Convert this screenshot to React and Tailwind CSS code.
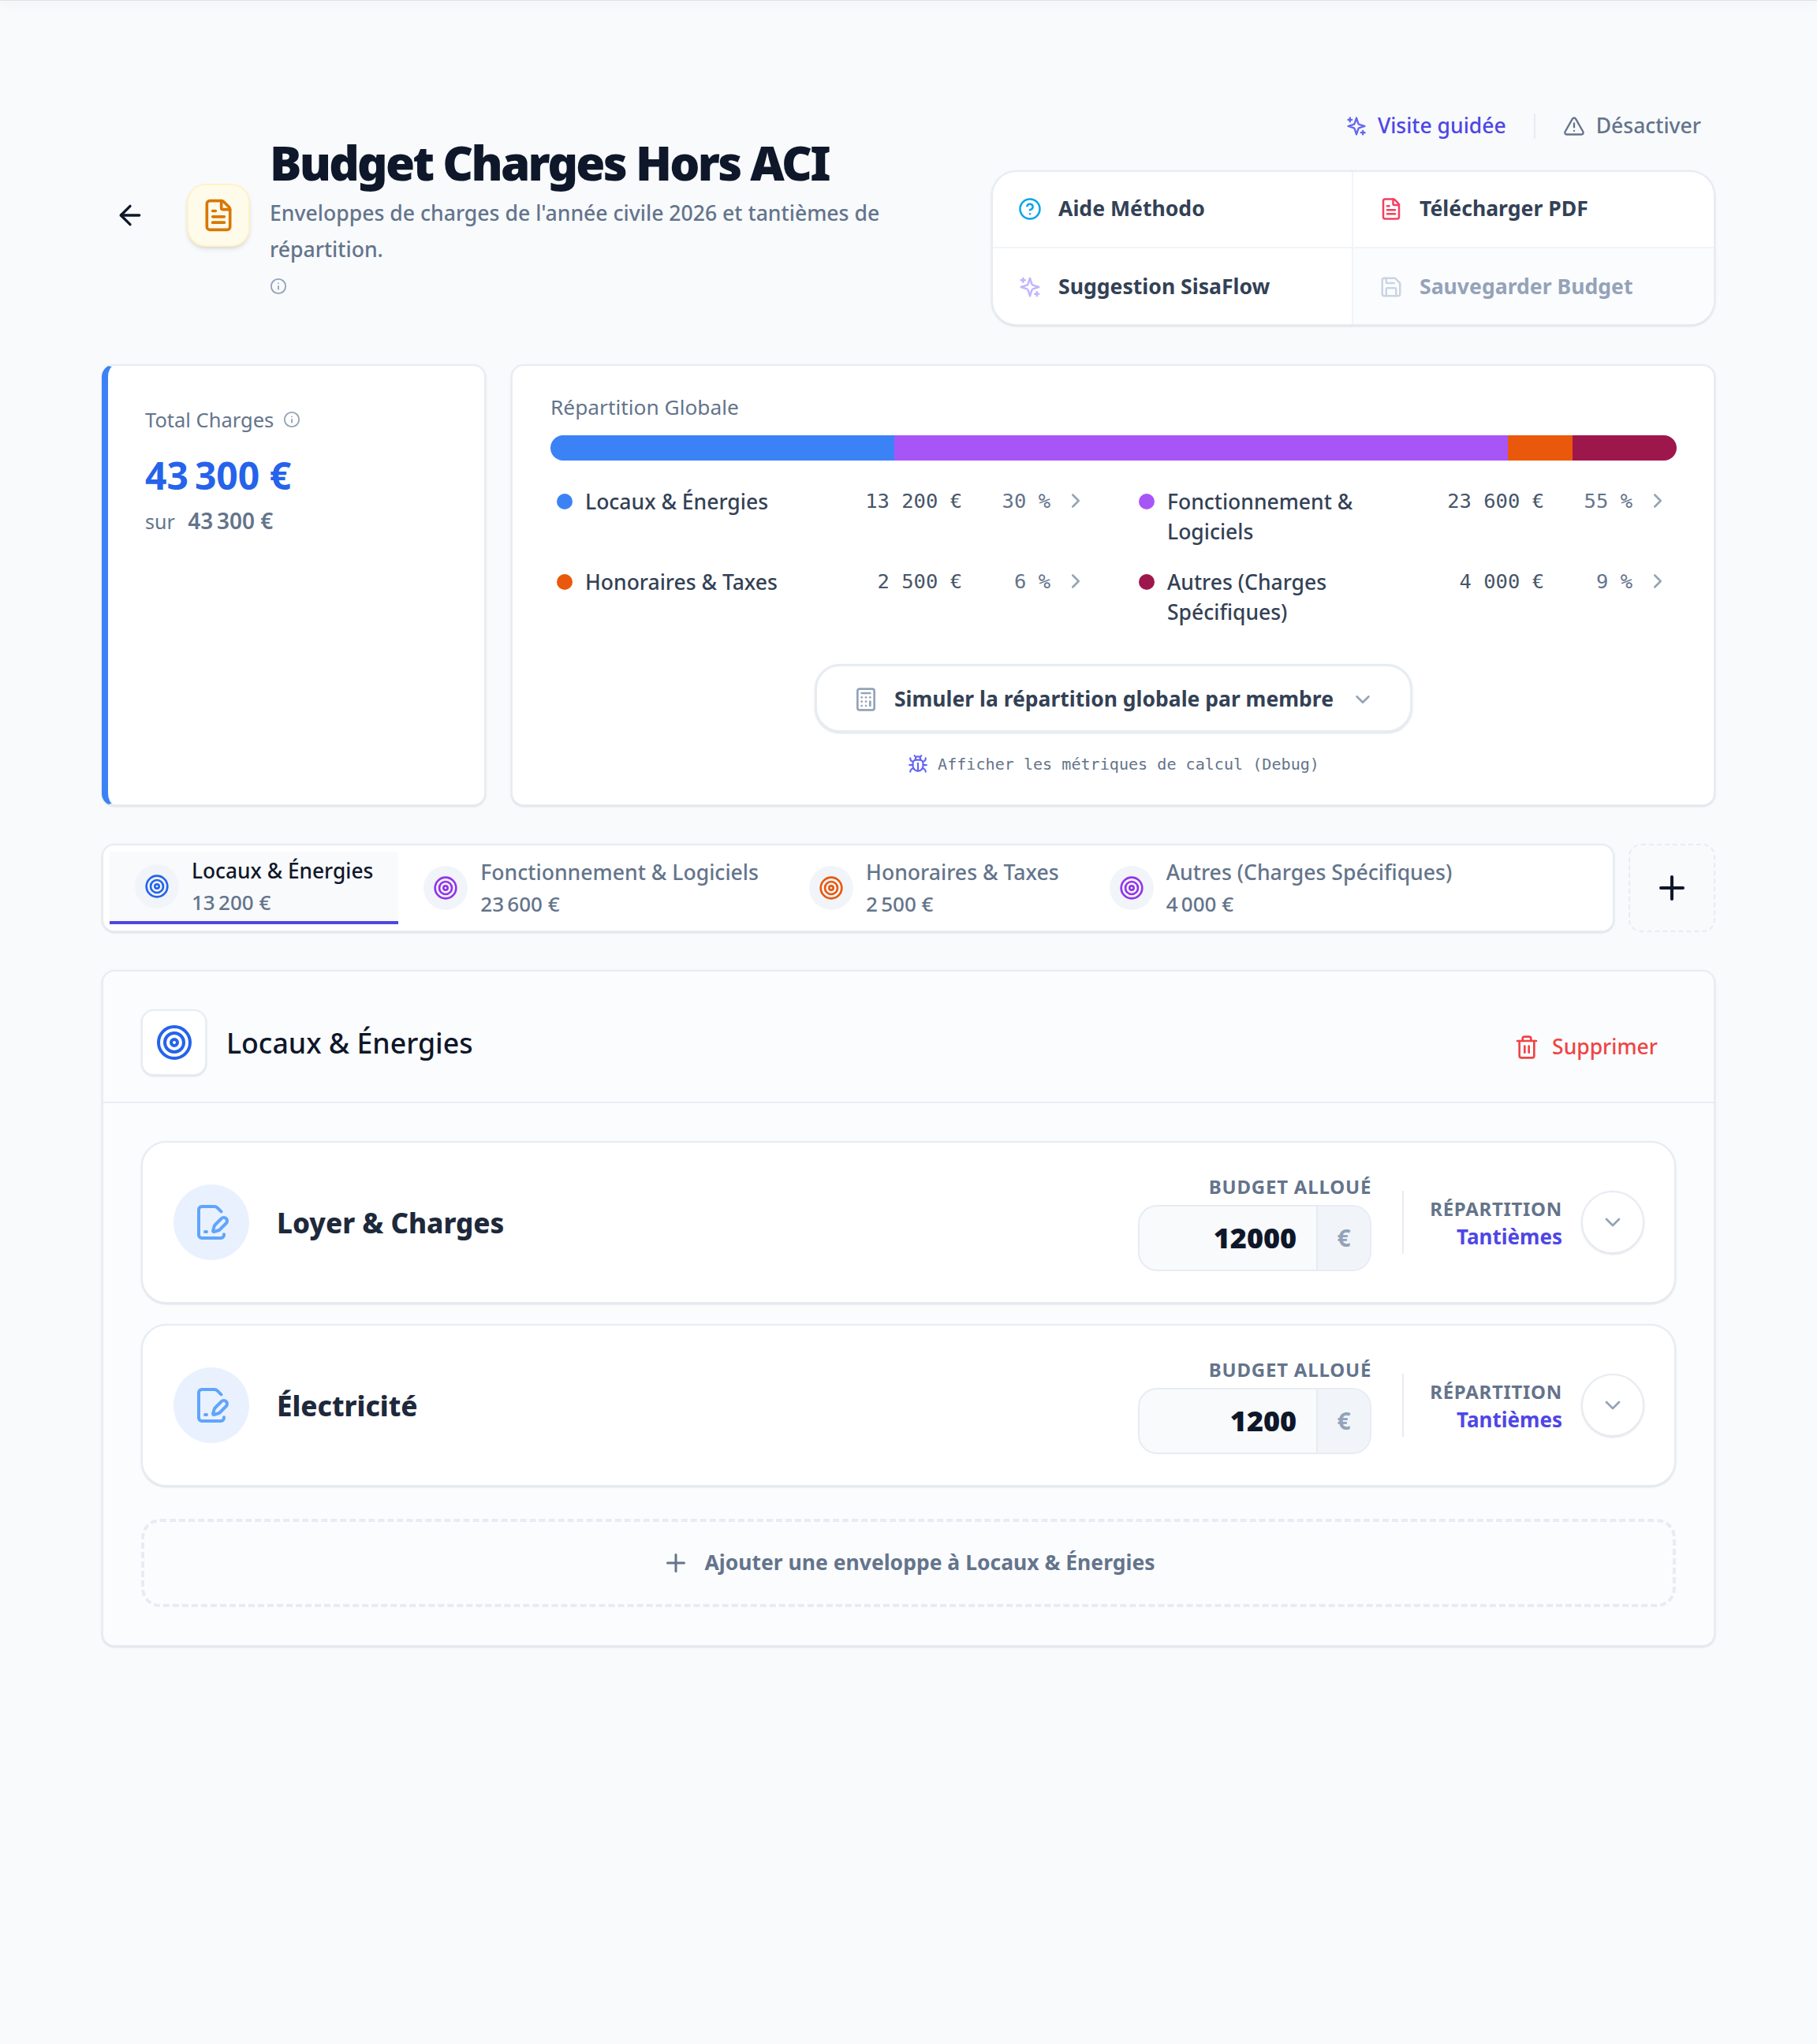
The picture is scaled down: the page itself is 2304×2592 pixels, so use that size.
import React from "react";
import {
  ArrowLeft, FileText, TriangleAlert, CircleHelp, Save, Calculator, ChevronDown,
  ChevronRight, Bug, Target, Plus, Trash2, Info, FilePenLine,
} from "lucide-react";

const legend = [
  { label: "Locaux & Énergies", amount: "13 200 €", pct: "30 %", dot: "bg-[#3b82f6]" },
  { label: "Fonctionnement & Logiciels", amount: "23 600 €", pct: "55 %", dot: "bg-[#a855f7]" },
  { label: "Honoraires & Taxes", amount: "2 500 €", pct: "6 %", dot: "bg-[#ea580c]" },
  { label: "Autres (Charges Spécifiques)", amount: "4 000 €", pct: "9 %", dot: "bg-[#9d174d]" },
];

const tabs = [
  { label: "Locaux & Énergies", amount: "13\u202f200\u00a0€", color: "text-[#2563eb]", active: true },
  { label: "Fonctionnement & Logiciels", amount: "23\u202f600\u00a0€", color: "text-[#9333ea]" },
  { label: "Honoraires & Taxes", amount: "2\u202f500\u00a0€", color: "text-[#ea580c]" },
  { label: "Autres (Charges Spécifiques)", amount: "4\u202f000\u00a0€", color: "text-[#9333ea]" },
];

function SparkIcon({ className }) {
  return (
    <svg className={className} viewBox="0 0 24 24" fill="none" stroke="currentColor" strokeWidth="2" strokeLinecap="round" strokeLinejoin="round">
      <path d="m12 3-1.912 5.813a2 2 0 0 1-1.275 1.275L3 12l5.813 1.912a2 2 0 0 1 1.275 1.275L12 21l1.912-5.813a2 2 0 0 1 1.275-1.275L21 12l-5.813-1.912a2 2 0 0 1-1.275-1.275L12 3Z" />
      <path d="M5 3v4" />
      <path d="M19 17v4" />
      <path d="M3 5h4" />
      <path d="M17 19h4" />
    </svg>
  );
}

function ActionCell({ icon: Icon, iconClass, textClass, children, className = "" }) {
  return (
    <button className={`flex items-center gap-[21px] text-[26.6px] font-bold ${textClass} ${className}`}>
      <Icon className={`w-[30px] h-[30px] ${iconClass}`} strokeWidth={2} />
      <span>{children}</span>
    </button>
  );
}

function EnvelopeCard({ title, value }) {
  return (
    <div className="h-[206px] rounded-[32px] border-2 border-[#e7ecf3] bg-white shadow-sm flex items-center pl-[39px] pr-[38px]">
      <div className="w-[96px] h-[96px] rounded-full bg-[#eaf1fe] flex items-center justify-center">
        <FilePenLine className="w-[48px] h-[48px] text-[#60a5fa]" strokeWidth={2} />
      </div>
      <div className="ml-[35px] pt-[2px] flex-1 text-[35px] font-extrabold text-[#1e293b]">{title}</div>
      <div className="flex flex-col items-end">
        <div className="text-[24px] leading-[32px] font-bold tracking-[0.8px] text-[#64748b]">BUDGET ALLOUÉ</div>
        <div className="mt-[7px] w-[296px] h-[84px] rounded-[24px] border-2 border-[#e7ecf3] bg-[#f8fafc] flex overflow-hidden">
          <div className="flex-1 flex items-center justify-end pr-[25px] text-[36px] font-black text-[#0f172a]">{value}</div>
          <div className="w-[68px] border-l-2 border-[#e7ecf3] bg-[#f1f5f9] flex items-center justify-center text-[30px] font-bold text-[#94a3b8]">€</div>
        </div>
      </div>
      <div className="ml-[39px] w-[2px] h-[80px] bg-[#e7ecf3]" />
      <div className="ml-[33px] flex flex-col items-end">
        <div className="text-[24px] leading-[36px] font-bold tracking-[0.7px] text-[#64748b]">RÉPARTITION</div>
        <div className="-mt-[1px] text-[26px] leading-[36px] font-bold text-[#4f46e5]">Tantièmes</div>
      </div>
      <button className="ml-[24px] w-[80px] h-[80px] rounded-full border-2 border-[#e7ecf3] bg-white shadow-sm flex items-center justify-center">
        <ChevronDown className="w-[32px] h-[32px] text-[#94a3b8]" strokeWidth={2} />
      </button>
    </div>
  );
}

export default function App() {
  return (
    <div className="min-h-[2592px] bg-[#f8fafc] font-['Noto_Sans',sans-serif] overflow-hidden">
      <div className="h-px bg-[#dfe2e6] shadow-[0_2px_12px_rgba(0,0,0,0.22)]" />
      <div className="px-[129px] pt-[143px]">
        {/* Header */}
        <div className="flex justify-between items-start">
          <div className="flex items-center mt-[28px]">
            <ArrowLeft className="ml-[16px] w-[40px] h-[40px] text-[#0f172a]" strokeWidth={2} />
            <div className="ml-[52px] w-[80px] h-[80px] rounded-[24px] border-2 border-[#fef3c7] bg-[#fffbeb] shadow-md flex items-center justify-center">
              <FileText className="w-[44px] h-[44px] text-[#d97706]" strokeWidth={2} />
            </div>
            <div className="ml-[25px]">
              <h1 className="mt-[1px] text-[60px] leading-[66px] font-black tracking-[-2.7px] text-[#0f172a]">Budget Charges Hors ACI</h1>
              <p className="mt-[8px] w-[800px] text-[26.6px] leading-[46px] font-medium text-[#64748b]">
                Enveloppes de charges de l'année civile 2026 et tantièmes de répartition.
              </p>
              <Info className="mt-[13px] w-[22px] h-[22px] text-[#94a3b8]" strokeWidth={2} />
            </div>
          </div>
          <div className="w-[918px]">
            <div className="flex items-center justify-end h-[32px] pr-[18px]">
              <SparkIcon className="w-[28px] h-[28px] text-[#6366f1]" />
              <span className="ml-[13px] text-[26.5px] font-medium text-[#4f46e5]">Visite guidée</span>
              <div className="ml-[35px] w-[2px] h-[32px] bg-[#e7ecf3]" />
              <TriangleAlert className="ml-[35px] w-[28px] h-[28px] text-[#64748b]" strokeWidth={2} />
              <span className="ml-[14px] text-[26.5px] font-medium text-[#64748b]">Désactiver</span>
            </div>
            <div className="mt-[40px] h-[197px] rounded-[32px] border-2 border-[#e7ecf3] bg-white shadow-sm grid grid-cols-2 grid-rows-2 overflow-hidden">
              <ActionCell icon={CircleHelp} iconClass="text-[#0ea5e9]" textClass="text-[#334155]" className="pl-[32px] border-r-2 border-b-2 border-[#f1f5f9]">Aide Méthodo</ActionCell>
              <ActionCell icon={FileText} iconClass="text-[#f43f5e]" textClass="text-[#334155]" className="pl-[33px] border-b-2 border-[#f1f5f9]">Télécharger PDF</ActionCell>
              <ActionCell icon={SparkIcon} iconClass="text-[#c4b5fd]" textClass="text-[#334155]" className="pl-[32px] pt-[2px] border-r-2 border-[#f1f5f9]">Suggestion SisaFlow</ActionCell>
              <ActionCell icon={Save} iconClass="text-[#cbd5e1]" textClass="text-[#94a3b8]" className="pl-[33px] pt-[2px] bg-[#fbfcfe]">Sauvegarder Budget</ActionCell>
            </div>
          </div>
        </div>

        {/* Stats */}
        <div className="mt-[49px] flex gap-[32px] h-[560px]">
          <div className="w-[487px] rounded-[16px] border-2 border-[#e7ecf3] border-l-[8px] border-l-[#3b82f6] bg-white shadow-sm pl-[47px] pt-[50px]">
            <div className="flex items-center gap-[12px] text-[25.5px] leading-[36px] text-[#64748b]">
              Total Charges <Info className="w-[22px] h-[22px] text-[#94a3b8]" strokeWidth={2} />
            </div>
            <div className="mt-[23px] text-[48px] leading-[60px] font-bold text-[#2563eb]">{"43\u202f300\u00a0€"}</div>
            <div className="mt-[9px] text-[25px] leading-[36px] text-[#64748b]">sur <span className="ml-[10px] text-[28px] font-semibold">{"43\u202f300\u00a0€"}</span></div>
          </div>
          <div className="flex-1 rounded-[16px] border-2 border-[#e7ecf3] bg-white shadow-sm pl-[48px] pr-[47px] pt-[32px]">
            <div className="text-[26.3px] leading-[40px] text-[#64748b]">Répartition Globale</div>
            <div className="mt-[16px] h-[32px] rounded-full overflow-hidden flex">
              <div className="w-[30.5%] bg-[#3b82f6]" />
              <div className="w-[54.5%] bg-[#a855f7]" />
              <div className="w-[5.77%] bg-[#ea580c]" />
              <div className="flex-1 bg-[#9d174d]" />
            </div>
            <div className="mt-[33px] grid grid-cols-2 gap-x-[48px] gap-y-[26px]">
              {legend.map((l) => (
                <div key={l.label} className="h-[76px] flex items-start pl-[8px] pr-[9px]">
                  <span className={`mt-[9px] w-[20px] h-[20px] rounded-full shrink-0 ${l.dot}`} />
                  <span className="ml-[16px] flex-1 text-[26.5px] leading-[38px] font-medium text-[#334155]">{l.label}</span>
                  <span className="-mt-[1px] w-[150px] shrink-0 text-right font-['DejaVu_Sans_Mono',monospace] text-[25.5px] leading-[38px] text-[#475569] whitespace-pre">{l.amount}</span>
                  <span className="-mt-[1px] w-[112px] shrink-0 text-right font-['DejaVu_Sans_Mono',monospace] text-[25.5px] leading-[38px] text-[#64748b] whitespace-pre">{l.pct}</span>
                  <ChevronRight className="ml-[17px] mt-[3px] w-[30px] h-[30px] text-[#94a3b8] shrink-0" strokeWidth={2} />
                </div>
              ))}
            </div>
            <div className="mt-[47px] flex justify-center">
              <button className="w-[758px] h-[87px] rounded-[32px] border-[3px] border-[#e7ecf3] bg-white shadow-sm flex items-center pl-[46px] pt-[2px]">
                <Calculator className="w-[32px] h-[32px] text-[#94a3b8]" strokeWidth={2} />
                <span className="ml-[20px] text-[26.5px] font-bold text-[#334155]">Simuler la répartition globale par membre</span>
                <ChevronDown className="ml-[22px] w-[30px] h-[30px] text-[#94a3b8]" strokeWidth={2} />
              </button>
            </div>
            <div className="mt-[26px] flex justify-center items-center h-[28px]">
              <Bug className="w-[26px] h-[26px] text-[#6366f1]" strokeWidth={2} />
              <span className="ml-[12px] font-['DejaVu_Sans_Mono',monospace] text-[20.1px] text-[#64748b]">Afficher les métriques de calcul (Debug)</span>
            </div>
          </div>
        </div>

        {/* Tabs */}
        <div className="mt-[48px] flex gap-[18px] h-[112px]">
          <div className="flex-1 rounded-[16px] border-2 border-[#e7ecf3] bg-white shadow-sm p-[8px] flex">
            {tabs.map((t) => (
              <div key={t.label} className={`h-[92px] flex items-center gap-[16px] px-[32px] ${t.active ? "bg-[#f8fafc] border-b-[4px] border-[#4f46e5]" : ""}`}>
                <div className="w-[56px] h-[56px] rounded-full bg-[#f1f5f9] flex items-center justify-center shrink-0">
                  <Target className={`w-[32px] h-[32px] ${t.color}`} strokeWidth={2} />
                </div>
                <div>
                  <div className={`leading-[40px] font-medium ${t.active ? "text-[26.3px] text-[#0f172a]" : "text-[26.6px] text-[#64748b]"}`}>{t.label}</div>
                  <div className="text-[26px] leading-[40px] font-medium text-[#64748b]">{t.amount}</div>
                </div>
              </div>
            ))}
          </div>
          <button className="w-[110px] rounded-[16px] border-2 border-dashed border-[#e7ecf3] flex items-center justify-center">
            <Plus className="w-[48px] h-[48px] text-[#0f172a]" strokeWidth={2} />
          </button>
        </div>

        {/* Panel */}
        <div className="mt-[48px] rounded-[16px] border-2 border-[#e7ecf3] bg-[#fbfcfe] shadow-sm">
          <div className="h-[167px] border-b-2 border-[#e7ecf3] flex items-center pl-[48px] pt-[14px]">
            <div className="w-[83px] h-[84px] rounded-[16px] border-2 border-[#e7ecf3] bg-white shadow-sm flex items-center justify-center">
              <Target className="w-[48px] h-[48px] text-[#2563eb]" strokeWidth={2} />
            </div>
            <div className="ml-[25px] pt-[3px] flex-1 text-[35.7px] font-medium text-[#0f172a]">Locaux &amp; Énergies</div>
            <button className="flex items-center gap-[16px] mr-[71px] mt-[12px] text-[26.5px] font-medium text-[#ef4444]">
              <Trash2 className="w-[32px] h-[32px]" strokeWidth={2} />
              Supprimer
            </button>
          </div>
          <div className="p-[48px] flex flex-col">
            <EnvelopeCard title="Loyer & Charges" value="12000" />
            <div className="mt-[26px]"><EnvelopeCard title="Électricité" value="1200" /></div>
            <button className="mt-[41px] h-[112px] rounded-[24px] border-[4px] border-dashed border-[#e7ecf3] flex items-center justify-center gap-[18px] text-[26.5px] font-bold text-[#64748b]">
              <Plus className="w-[36px] h-[36px]" strokeWidth={2} />
              Ajouter une enveloppe à Locaux &amp; Énergies
            </button>
          </div>
        </div>
      </div>
    </div>
  );
}
